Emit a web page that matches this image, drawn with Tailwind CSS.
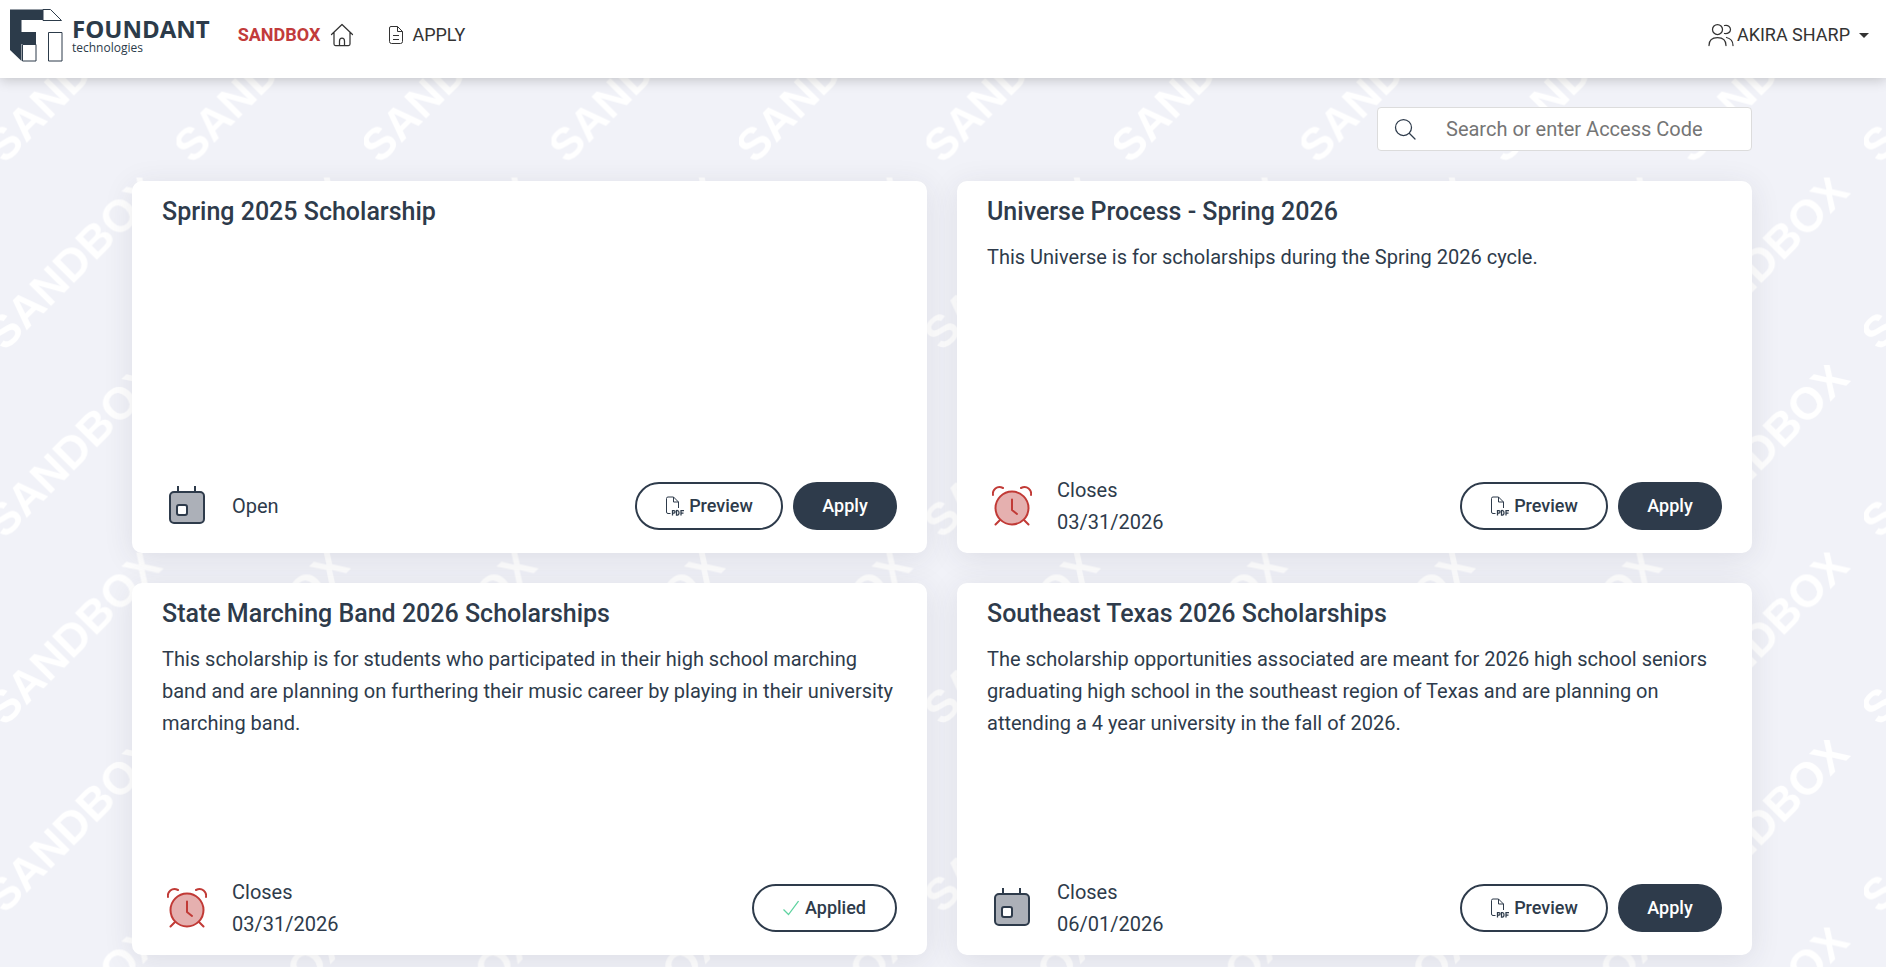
<!DOCTYPE html>
<html lang="en">
<head>
  <meta charset="UTF-8" />
  <meta name="viewport" content="width=device-width, initial-scale=1.0" />
  <title>Apply</title>
  <script src="https://cdn.jsdelivr.net/npm/@tailwindcss/browser@4"></script>
</head>
<body class="relative isolate min-h-screen bg-[#f1f2f8] font-['Roboto',sans-serif] text-[#2e3b4b] overflow-x-hidden">

  <!-- repeated watermark -->
  <svg class="absolute inset-0 -z-10 w-full h-full" aria-hidden="true">
    <defs>
      <pattern id="watermark" width="150" height="150" patternUnits="userSpaceOnUse" patternTransform="translate(-11 -10) scale(1.25)">
        <text transform="translate(67 67) rotate(-45)" y="13" text-anchor="middle" class="font-['Liberation_Sans',sans-serif] font-bold text-[36px] fill-white">SANDBOX</text>
      </pattern>
    </defs>
    <rect width="100%" height="100%" fill="url(#watermark)" />
  </svg>

  <!-- shared icons -->
  <svg class="hidden">
    <symbol id="calendar" viewBox="0 0 40 40">
      <path d="M11 0v6M28 0v6" fill="none" stroke="#2e3b4b" stroke-width="2" />
      <rect x="3" y="6" width="34" height="31" rx="4" fill="#acb0b8" stroke="#2e3b4b" stroke-width="2" />
      <rect x="10" y="19" width="10" height="10" rx="2" fill="#fff" stroke="#2e3b4b" stroke-width="2" />
    </symbol>
    <symbol id="alarm" viewBox="0 0 40 40">
      <g stroke="#c13a36" stroke-width="2" stroke-linecap="round" stroke-linejoin="round" fill="none">
        <circle cx="20" cy="22" r="16.500" fill="#e5b0af" />
        <path d="M20 13.500v10.500l5 4M8 34l-4.500 4.500M32 34l4.500 4.500M1 9c-1-5 4-10 10-7M39 9c1-5-4-10-10-7" />
      </g>
    </symbol>
    <symbol id="pdf" viewBox="0 0 20 20">
      <g fill="none" stroke="#2e3b4b">
        <path d="M5.500 17.500H3Q1.500 17.500 1.500 16V2.500Q1.500 1 3 1H8.500L13.500 6V12M8.500 1V6H13.500" />
        <path d="M7.500 19.500v-5h1.500q1 0 1 1.300t-1 1.300h-1.500M11.500 14.500v4.500h1q1.500 0 1.500-2.200t-1.500-2.300zM16 19.500v-5h3M16 17h2.500" stroke-width="1.250" />
      </g>
    </symbol>
  </svg>

  <header class="h-[78px] bg-white shadow-[0_2px_12px_rgba(0,0,0,0.2)] flex items-start justify-between pl-[10px] pr-4 text-[18px] leading-[26px] text-[#333]">
    <nav class="flex items-start">
      <a href="#" class="flex items-start pt-2 mr-7 text-[#2c3b4a]" aria-label="Foundant technologies">
        <svg class="w-[54px] h-[54px]" viewBox="0 0 54 54" fill="none" stroke="currentColor">
          <path d="M0 1.500H33V12H11.500V24H26V36H11.500V53L0 42z" fill="currentColor" stroke="none" />
          <path d="M33 1.500H40.500L51.500 12.500H33zM12.500 36.500H26V53H12.500zM38.500 24.500H52V53H38.500z" />
        </svg>
        <span class="flex flex-col ml-2 pt-2 font-['Open_Sans',sans-serif]">
          <span class="text-[24px] leading-[26px] font-bold">FOUNDANT</span>
          <span class="text-[12px] leading-[12px]">technologies</span>
        </span>
      </a>
      <a href="#" class="flex items-center gap-[10px] mt-[22px] mr-[34px] font-bold text-[#c23b3b]">
        SANDBOX
        <svg class="w-6 h-6 text-[#333]" viewBox="0 0 24 24" fill="none" stroke="currentColor" stroke-width="1.250" stroke-linecap="round" stroke-linejoin="round">
          <path d="M1.500 11.500L12 1.500L22.500 11.500M4 9.500V21Q4 22.500 5.500 22.500H18.500Q20 22.500 20 21V9.500M9.500 22.500V18Q9.500 15 12 15T14.500 18V22.500" />
        </svg>
      </a>
      <a href="#" class="flex items-center gap-2 mt-[22px]">
        <svg class="w-4 h-5" viewBox="0 0 16 20" fill="none" stroke="currentColor" stroke-linejoin="round">
          <path d="M3 1.500H9.500L14.500 6.500V16.500Q14.500 18.500 12.500 18.500H3.500Q1.500 18.500 1.500 16.500V3Q1.500 1.500 3 1.500zM9.500 1.500V6.500H14.500M5 10.500H11M5 14.500H11" />
        </svg>
        APPLY
      </a>
    </nav>
    <button type="button" class="flex items-center mt-[22px]">
      <svg class="w-[26px] h-6 mr-[3px]" viewBox="0 0 26 24" fill="none" stroke="currentColor" stroke-width="1.250" stroke-linecap="round">
        <circle cx="9.500" cy="6.500" r="5" />
        <path d="M1 22.500Q1 14.500 9.500 14.500T18 22.500M16.500 2.500C20 1.500 22.500 4 22.500 6.500S20 11 16.500 10.500M18.500 14.500Q25 16 25 22.500" />
      </svg>
      AKIRA SHARP
      <svg class="w-[10px] h-[5px] ml-[9px] mr-px" viewBox="0 0 10 5" fill="currentColor"><path d="M0 0H10L5 5z" /></svg>
    </button>
  </header>

  <main class="pt-[29px] pb-[13px] pr-0.5 text-[20px] leading-[32px]">
    <div class="max-w-[1620px] mx-auto">
      <form class="ml-auto w-[375px] h-11 mb-[30px] flex items-center bg-white border border-[#dcdcdc] rounded-[4px]">
        <svg class="w-[22px] h-[22px] ml-4 shrink-0" viewBox="0 0 22 22" fill="none" stroke="currentColor" stroke-width="1.250" stroke-linecap="round">
          <circle cx="9.500" cy="9.500" r="8" /><path d="M15.500 15.500L21 21" />
        </svg>
        <input type="text" aria-label="Search or enter Access Code" placeholder="Search or enter Access Code" class="ml-[30px] w-full outline-none placeholder:text-[#757575]" />
      </form>

      <div class="grid grid-cols-2 gap-[30px]">
        <section class="flex flex-col min-h-[372px] bg-white rounded-[10px] px-[30px] py-[15px] shadow-[0_5px_30px_rgba(47,47,67,0.1)]">
          <h2 class="text-[25px] leading-[32px] font-medium mb-[13px]">Spring 2025 Scholarship</h2>
          <div class="mt-auto h-16 flex items-center">
            <svg class="w-10 h-10 ml-[5px] mr-[25px]"><use href="#calendar" /></svg>
            <p>Open</p>
            <div class="ml-auto flex items-center gap-[10px] text-[18px] leading-[26px] font-medium">
              <button type="button" class="h-12 w-[148px] rounded-full border-2 border-[#2e3b4b] flex items-center justify-center gap-1">
                <svg class="w-5 h-5"><use href="#pdf" /></svg>Preview
              </button>
              <button type="button" class="h-12 w-[104px] rounded-full bg-[#2e3b4b] text-white">Apply</button>
            </div>
          </div>
        </section>

        <section class="flex flex-col min-h-[372px] bg-white rounded-[10px] px-[30px] py-[15px] shadow-[0_5px_30px_rgba(47,47,67,0.1)]">
          <h2 class="text-[25px] leading-[32px] font-medium mb-[13px]">Universe Process - Spring 2026</h2>
          <p>This Universe is for scholarships during the Spring 2026 cycle.</p>
          <div class="mt-auto h-16 flex items-center">
            <svg class="w-10 h-10 ml-[5px] mr-[25px]"><use href="#alarm" /></svg>
            <p>Closes<br />03/31/2026</p>
            <div class="ml-auto flex items-center gap-[10px] text-[18px] leading-[26px] font-medium">
              <button type="button" class="h-12 w-[148px] rounded-full border-2 border-[#2e3b4b] flex items-center justify-center gap-1">
                <svg class="w-5 h-5"><use href="#pdf" /></svg>Preview
              </button>
              <button type="button" class="h-12 w-[104px] rounded-full bg-[#2e3b4b] text-white">Apply</button>
            </div>
          </div>
        </section>

        <section class="flex flex-col min-h-[372px] bg-white rounded-[10px] px-[30px] py-[15px] shadow-[0_5px_30px_rgba(47,47,67,0.1)]">
          <h2 class="text-[25px] leading-[32px] font-medium mb-[13px]">State Marching Band 2026 Scholarships</h2>
          <p>This scholarship is for students who participated in their high school marching band and are planning on furthering their music career by playing in their university marching band.</p>
          <div class="mt-auto h-16 flex items-center">
            <svg class="w-10 h-10 ml-[5px] mr-[25px]"><use href="#alarm" /></svg>
            <p>Closes<br />03/31/2026</p>
            <div class="ml-auto flex items-center gap-[10px] text-[18px] leading-[26px] font-medium">
              <button type="button" class="h-12 w-[145px] rounded-full border-2 border-[#2e3b4b] flex items-center justify-center gap-[6px]">
                <svg class="w-4 h-4" viewBox="0 0 16 16" fill="none" stroke="#5fd3a0" stroke-width="1.250"><path d="M0.500 9.500L5.500 14.500L15.500 1" /></svg>Applied
              </button>
            </div>
          </div>
        </section>

        <section class="flex flex-col min-h-[372px] bg-white rounded-[10px] px-[30px] py-[15px] shadow-[0_5px_30px_rgba(47,47,67,0.1)]">
          <h2 class="text-[25px] leading-[32px] font-medium mb-[13px]">Southeast Texas 2026 Scholarships</h2>
          <p>The scholarship opportunities associated are meant for 2026 high school seniors graduating high school in the southeast region of Texas and are planning on attending a 4 year university in the fall of 2026.</p>
          <div class="mt-auto h-16 flex items-center">
            <svg class="w-10 h-10 ml-[5px] mr-[25px]"><use href="#calendar" /></svg>
            <p>Closes<br />06/01/2026</p>
            <div class="ml-auto flex items-center gap-[10px] text-[18px] leading-[26px] font-medium">
              <button type="button" class="h-12 w-[148px] rounded-full border-2 border-[#2e3b4b] flex items-center justify-center gap-1">
                <svg class="w-5 h-5"><use href="#pdf" /></svg>Preview
              </button>
              <button type="button" class="h-12 w-[104px] rounded-full bg-[#2e3b4b] text-white">Apply</button>
            </div>
          </div>
        </section>
      </div>
    </div>
  </main>

</body>
</html>
